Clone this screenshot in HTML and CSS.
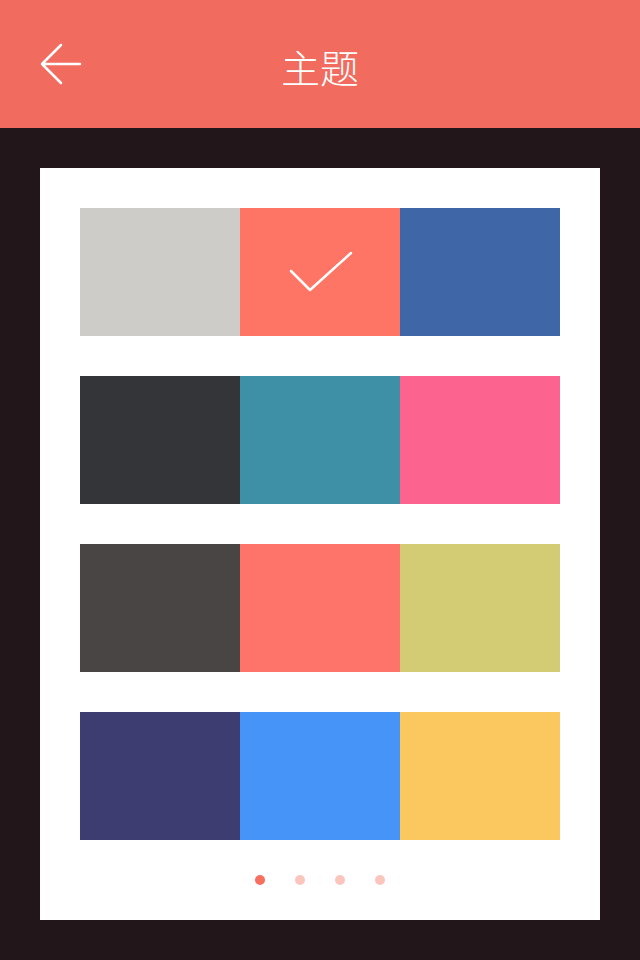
FILE: index.html
```html
<!DOCTYPE html>
<html lang="zh">
<head>
<meta charset="utf-8">
<link rel="stylesheet" href="styles.css">
</head>
<body>
<header class="bar">
  <svg class="back" width="44" height="44" viewBox="0 0 44 44">
    <path d="M21 3 L2 22 L21 41 M2 22 L40 22" fill="none" stroke="#fff" stroke-width="2.5" stroke-linecap="round" stroke-linejoin="round"/>
  </svg>
  <h1 class="title">主题</h1>
</header>
<main class="stage">
  <section class="card">
    <div class="row">
      <div class="sw c1"></div>
      <div class="sw c2 selected">
        <svg width="64" height="44" viewBox="0 0 64 44"><path d="M2 23 L21 42 L62 5" fill="none" stroke="#fff" stroke-width="2.5" stroke-linecap="round" stroke-linejoin="round"/></svg>
      </div>
      <div class="sw c3"></div>
    </div>
    <div class="row">
      <div class="sw c4"></div>
      <div class="sw c5"></div>
      <div class="sw c6"></div>
    </div>
    <div class="row">
      <div class="sw c7"></div>
      <div class="sw c8"></div>
      <div class="sw c9"></div>
    </div>
    <div class="row">
      <div class="sw c10"></div>
      <div class="sw c11"></div>
      <div class="sw c12"></div>
    </div>
    <div class="dots">
      <span class="dot active"></span>
      <span class="dot"></span>
      <span class="dot"></span>
      <span class="dot"></span>
    </div>
  </section>
</main>
</body>
</html>
```
FILE: styles.css
```css
* { box-sizing: border-box; }
html, body { margin: 0; padding: 0; }
body {
  width: 640px;
  height: 960px;
  background: #22161b;
  font-family: "Noto Sans CJK SC", "Noto Sans", sans-serif;
  overflow: hidden;
}
.bar {
  height: 128px;
  background: #f16c5e;
  display: flex;
  align-items: center;
  justify-content: center;
  position: relative;
}
.back {
  position: absolute;
  left: 40px;
  top: 42px;
}
.title {
  margin: 0;
  color: #fff;
  font-size: 39px;
  font-weight: 300;
  line-height: 1;
  margin-top: 4px;
}
.stage {
  padding: 40px;
}
.card {
  background: #fff;
  padding: 40px 40px 35px;
  display: flex;
  flex-direction: column;
  gap: 40px;
}
.row {
  display: flex;
}
.sw {
  width: 160px;
  height: 128px;
  display: flex;
  align-items: center;
  justify-content: center;
}
.sw svg { margin-left: 2px; margin-top: -5px; }
.c1 { background: #cdccc9; }
.c2 { background: #fe7566; }
.c3 { background: #3f67a8; }
.c4 { background: #343539; }
.c5 { background: #3d90a5; }
.c6 { background: #fc638e; }
.c7 { background: #4a4545; }
.c8 { background: #fe746a; }
.c9 { background: #d4cc75; }
.c10 { background: #3d3d72; }
.c11 { background: #4694f8; }
.c12 { background: #fac85f; }
.dots {
  display: flex;
  justify-content: center;
  gap: 30px;
  margin-top: -5px;
  height: 10px;
}
.dot {
  width: 10px;
  height: 10px;
  border-radius: 50%;
  background: #fdc6bd;
}
.dot.active { background: #f7705f; }
```
